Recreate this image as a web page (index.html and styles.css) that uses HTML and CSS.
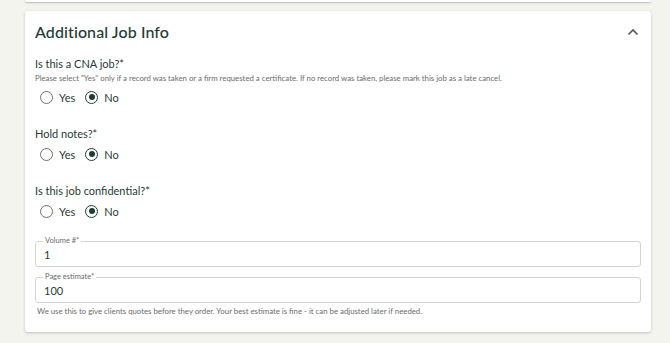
FILE: index.html
```html
<!DOCTYPE html>
<html>
<head>
<meta charset="utf-8">
<link rel="stylesheet" href="styles.css">
</head>
<body>
<div class="page">
  <div class="prev-card"></div>
  <section class="card">
    <header class="card-head">
      <h2 class="title">Additional Job Info</h2>
      <svg class="chev" width="12" height="8" viewBox="0 0 12 8"><path d="M1.5 6.5 L6 2 L10.5 6.5" fill="none" stroke="#555" stroke-width="1.6"/></svg>
    </header>
    <div class="group">
      <div class="q">Is this a CNA job?*</div>
      <div class="hint">Please select "Yes" only if a record was taken or a firm requested a certificate. If no record was taken, please mark this job as a late cancel.</div>
      <div class="radios">
        <label class="opt"><span class="radio"></span>Yes</label>
        <label class="opt"><span class="radio on"></span>No</label>
      </div>
    </div>
    <div class="group">
      <div class="q">Hold notes?*</div>
      <div class="radios">
        <label class="opt"><span class="radio"></span>Yes</label>
        <label class="opt"><span class="radio on"></span>No</label>
      </div>
    </div>
    <div class="group">
      <div class="q">Is this job confidential?*</div>
      <div class="radios">
        <label class="opt"><span class="radio"></span>Yes</label>
        <label class="opt"><span class="radio on"></span>No</label>
      </div>
    </div>
    <fieldset class="field first">
      <legend>Volume #*</legend>
      <div class="val">1</div>
    </fieldset>
    <fieldset class="field">
      <legend>Page estimate*</legend>
      <div class="val">100</div>
    </fieldset>
    <div class="hint foot">We use this to give clients quotes before they order. Your best estimate is fine - it can be adjusted later if needed.</div>
  </section>
</div>
</body>
</html>
```
FILE: styles.css
```css
html, body { margin: 0; padding: 0; }
body {
  background: #f4f4ef;
  font-family: "Lato", "Liberation Sans", sans-serif;
  color: #1f3b35;
  width: 670px;
  height: 343px;
  overflow: hidden;
}
.page { padding: 0 19px 0 25px; }
.prev-card {
  height: 2px;
  background: #fff;
  box-shadow: 0 1px 2px rgba(0,0,0,0.25);
  border-radius: 0 0 3px 3px;
  margin-bottom: 9px;
}
.card {
  background: #fff;
  border-radius: 3px;
  box-shadow: 0 1px 3px rgba(0,0,0,0.22);
  padding: 0 10px 16px 10px;
  height: 305px;
}
.card-head {
  display: flex;
  align-items: center;
  justify-content: space-between;
  height: 40px;
}
.title {
  margin: 0;
  font-size: 16px;
  font-weight: 500;
  letter-spacing: 0.1px;
  color: #1f3b35;
}
.chev { margin-right: 2px; margin-top: 1px; }
.group { margin-top: 6px; margin-bottom: 22px; }
.group + .group { margin-top: 0; }
.q { font-size: 11px; line-height: 14px; color: #1f3b35; }
.hint { font-size: 7.8px; line-height: 12px; color: #6b6b6b; margin-top: 1px; }
.radios { display: flex; gap: 10px; margin-top: 5px; padding-left: 5px; height: 16px; align-items: center; }
.opt { display: flex; align-items: center; font-size: 11px; color: #1f3b35; gap: 6px; }
.radio {
  width: 11px; height: 11px;
  border: 1.3px solid #6f6f6f;
  border-radius: 50%;
  display: inline-flex;
  align-items: center;
  justify-content: center;
}
.radio.on { border-color: #1f3b35; }
.radio.on::after {
  content: "";
  width: 6px; height: 6px;
  border-radius: 50%;
  background: #1f3b35;
}
.field {
  margin: 0;
  border: 1px solid #d3d3d3;
  border-radius: 3px;
  padding: 0 8px;
  height: 30px;
  box-sizing: border-box;
}
.field.first { margin-top: -4px; }
.field + .field { margin-top: 6px; }
.field legend {
  font-size: 7.5px;
  color: #6b6b6b;
  padding: 0 2px;
  margin-left: -1px;
  line-height: 8px;
}
.val { font-size: 11px; line-height: 14px; margin-top: 3px; color: #1f3b35; }
.hint.foot { margin-top: 2px; padding-left: 2px; }
```
